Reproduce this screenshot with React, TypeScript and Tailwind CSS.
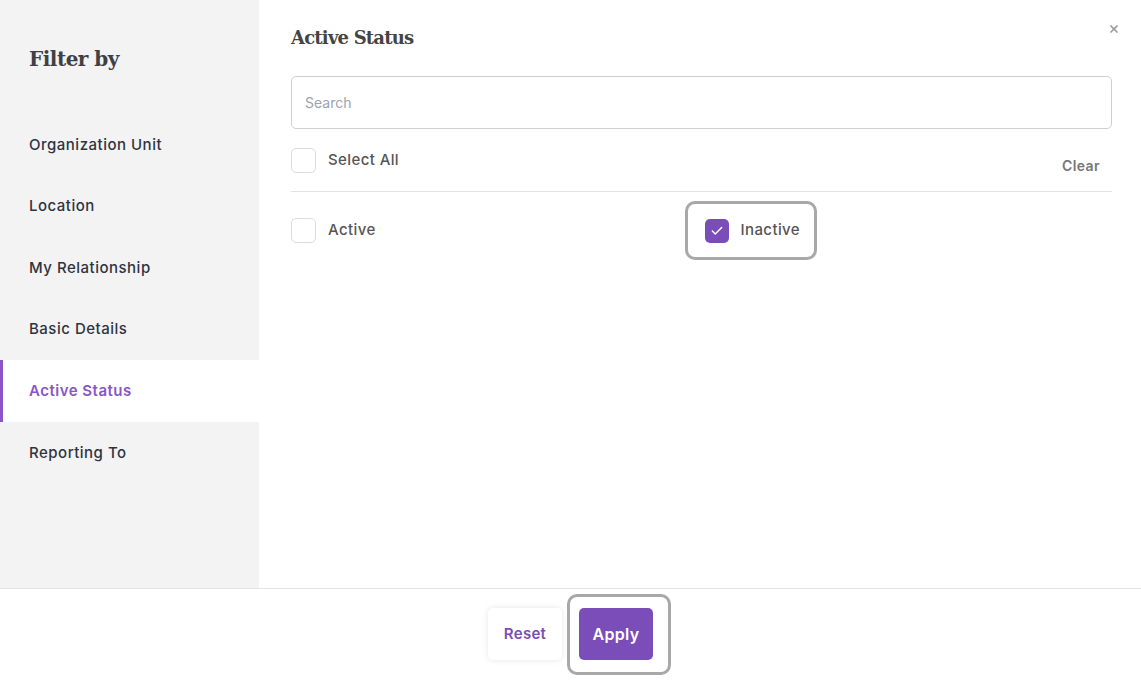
import { Check, X } from "lucide-react";

const items = [
  "Organization Unit",
  "Location",
  "My Relationship",
  "Basic Details",
  "Active Status",
  "Reporting To",
];

function Box({ checked }: { checked?: boolean }) {
  return checked ? (
    <span className="w-[24px] h-[24px] rounded-[5px] bg-[#7a4db8] flex items-center justify-center">
      <Check className="w-[14px] h-[14px] text-white" strokeWidth={2.5} />
    </span>
  ) : (
    <span className="w-[25px] h-[25px] rounded-[5px] border border-[#dcdcdc] bg-white" />
  );
}

export default function App() {
  return (
    <div className="w-[1141px] h-[680px] bg-white flex flex-col text-[#333] [font-family:Inter,'Liberation_Sans',sans-serif]">
      <div className="flex flex-1 min-h-0">
        <aside className="w-[259px] bg-[#f3f3f3] pt-[44px]">
          <h2 className="pl-[29px] text-[20px] font-bold text-[#3f3f46] [font-family:'DejaVu_Serif',serif] tracking-[-0.5px] mb-[40px]">
            Filter by
          </h2>
          <ul className="tracking-[0.5px]">
            {items.map((t) => {
              const active = t === "Active Status";
              return (
                <li
                  key={t}
                  className={
                    active
                      ? "h-[62px] flex items-center pl-[26px] border-l-[3px] border-[#8a55c9] bg-white text-[#8a55c9] font-semibold text-[15px]"
                      : "h-[61.5px] flex items-center pl-[29px] text-[#2f3341] font-medium text-[15px]"
                  }
                >
                  {t}
                </li>
              );
            })}
          </ul>
        </aside>
        <main className="flex-1 relative pl-[32px] pr-[29px] pt-[24px]">
          <button className="absolute right-[21px] top-[23px] text-[#9a9a9a]">
            <X className="w-[12px] h-[12px]" strokeWidth={3.5} />
          </button>
          <h3 className="text-[18px] font-bold text-[#444] [font-family:'DejaVu_Serif',serif] tracking-[-0.8px]">
            Active Status
          </h3>
          <input
            placeholder="Search"
            className="mt-[25px] w-full h-[53px] rounded-[5px] border border-[#cfcfcf] px-[13px] text-[14px] placeholder:text-[#9ca3af] outline-none"
          />
          <div className="flex items-start justify-between mt-[19px] pb-[15px] border-b border-[#e3e3e3] tracking-[0.4px]">
            <label className="flex items-center gap-[12px] text-[15px] font-medium text-[#555]">
              <Box />
              Select All
            </label>
            <span className="mt-[7px] mr-[12px] text-[14px] font-semibold text-[#777]">Clear</span>
          </div>
          <div className="grid grid-cols-2 mt-[26px] tracking-[0.4px]">
            <label className="flex items-center gap-[12px] text-[15px] font-medium text-[#555]">
              <Box />
              Active
            </label>
            <label className="relative flex items-center gap-[12px] text-[15px] font-medium text-[#555] pl-[3px]">
              <span className="absolute left-[-17px] top-[-17px] w-[132px] h-[59px] rounded-[10px] border-[3px] border-[#a8a8a8]" />
              <Box checked />
              Inactive
            </label>
          </div>
        </main>
      </div>
      <footer className="h-[92px] border-t border-[#e3e3e3] flex items-center justify-center gap-[17px] pb-[1px] tracking-[0.3px]">
        <button className="w-[74px] h-[52px] rounded-[5px] bg-white shadow-[0_0_6px_rgba(0,0,0,0.1)] text-[15px] font-semibold text-[#7a4db8]">
          Reset
        </button>
        <span className="relative">
          <span className="absolute left-[-12px] top-[-14px] w-[104px] h-[81px] rounded-[10px] border-[3px] border-[#a8a8a8]" />
          <button className="relative w-[74px] h-[52px] rounded-[5px] bg-[#7a4db8] text-[16px] font-semibold text-white">
            Apply
          </button>
        </span>
      </footer>
    </div>
  );
}
